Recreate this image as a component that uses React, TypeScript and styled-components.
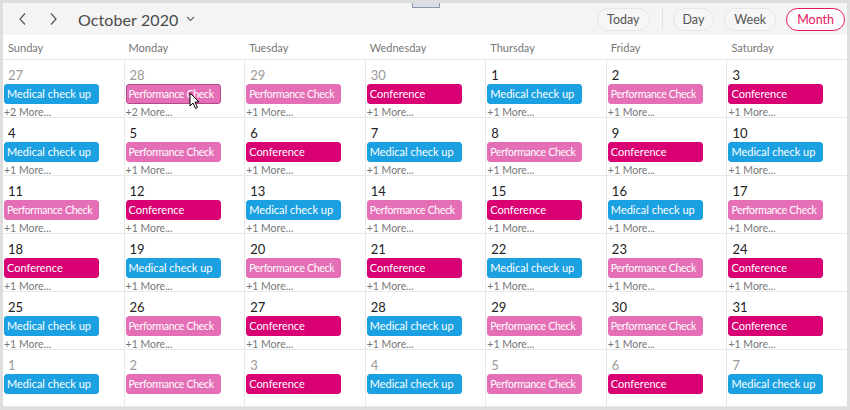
import React from "react";
import styled, { createGlobalStyle } from "styled-components";

const Global = createGlobalStyle`
  html, body { margin: 0; padding: 0; background: #fff; }
  body { font-family: "Lato", "Noto Sans", sans-serif; }
  * { box-sizing: border-box; }
`;

const Frame = styled.div`
  position: relative;
  width: 850px;
  height: 410px;
  border: 3px solid #dedede;
  background: #fff;
  display: flex;
  flex-direction: column;
  overflow: hidden;
`;

const Toolbar = styled.div`
  height: 32px;
  background: #f4f4f4;
  display: flex;
  align-items: center;
  padding: 0 0 0 5px;
  flex-shrink: 0;
`;

const NavButton = styled.button`
  width: 30px;
  height: 24px;
  border: none;
  background: transparent;
  display: flex;
  align-items: center;
  justify-content: center;
  padding: 0;
  color: #555;
`;

const Title = styled.div`
  margin-left: 10px;
  font-size: 16px;
  color: #4a4a4a;
  display: flex;
  align-items: center;
  gap: 8px;
  letter-spacing: 0.1px;
`;

const Spacer = styled.div`
  flex: 1;
`;

const Pill = styled.button<{ $active?: boolean }>`
  height: 23px;
  border-radius: 12px;
  border: 1px solid ${(p) => (p.$active ? "#e3165b" : "#e6e6e6")};
  background: ${(p) => (p.$active ? "#fff" : "#f6f6f6")};
  color: ${(p) => (p.$active ? "#e3165b" : "#555")};
  font-family: "Lato", sans-serif;
  font-size: 12.5px;
  padding: 0 ${(p) => (p.$active ? 10 : 9)}px;
  margin-left: 10px;
  display: flex;
  align-items: center;
`;

const Divider = styled.div`
  width: 1px;
  height: 22px;
  background: #e2e2e2;
  margin: 0 0 0 12px;
`;

const DayNames = styled.div`
  display: grid;
  grid-template-columns: repeat(7, 1fr);
  height: 25px;
  border-bottom: 1px solid #e6e6e6;
  flex-shrink: 0;
`;

const DayName = styled.div`
  font-size: 11px;
  color: #777;
  padding: 6px 0 0 5px;
`;

const Grid = styled.div`
  flex: 1;
  display: grid;
  grid-template-columns: repeat(7, 1fr);
  grid-template-rows: repeat(5, 58px) 1fr;
`;

const Cell = styled.div<{ $first: boolean }>`
  border-left: ${(p) => (p.$first ? "none" : "1px solid #e8e8e8")};
  border-bottom: 1px solid #e8e8e8;
  display: flex;
  flex-direction: column;
  min-width: 0;
  overflow: hidden;
`;

const DateNum = styled.div<{ $other: boolean }>`
  flex-shrink: 0;
  font-size: 13px;
  color: ${(p) => (p.$other ? "#9a9a9a" : "#222")};
  height: 24px;
  padding: 8px 0 0 5px;
  line-height: 14px;
`;

const colors = {
  med: "#1ba1e2",
  perf: "#e56fb6",
  conf: "#d80073",
} as const;

type Kind = keyof typeof colors;

const labels: Record<Kind, string> = {
  med: "Medical check up",
  perf: "Performance Check",
  conf: "Conference",
};

const Chip = styled.div<{ $kind: Kind; $selected?: boolean }>`
  flex-shrink: 0;
  width: 95px;
  height: 20px;
  margin-left: 1px;
  border-radius: 3px;
  background: ${(p) => colors[p.$kind]};
  border: 1px solid ${(p) => (p.$selected ? "#b04a88" : colors[p.$kind])};
  color: #fff;
  font-size: ${(p) => (p.$kind === "perf" ? 10.5 : 11)}px;
  letter-spacing: ${(p) => (p.$kind === "perf" ? -0.3 : 0)}px;
  line-height: 18px;
  padding-left: 2px;
  white-space: nowrap;
  overflow: hidden;
`;

const More = styled.div`
  flex-shrink: 0;
  font-size: 10.5px;
  color: #777;
  padding-left: 1px;
  margin-top: 2px;
  line-height: 12px;
`;

const Cursor = styled.svg`
  position: absolute;
  left: 186px;
  top: 89px;
`;

const TopTab = styled.div`
  position: absolute;
  left: 409px;
  top: -3px;
  width: 28px;
  height: 8px;
  background: #d8dde8;
  border: 1px solid #8d96a8;
  border-top: none;
`;

const order: Kind[] = ["med", "perf", "conf"];

type Day = { n: number; other: boolean; kind: Kind; more: number };

function buildDays(): Day[] {
  const days: Day[] = [];
  const nums: [number, boolean][] = [];
  for (let d = 27; d <= 30; d++) nums.push([d, true]);
  for (let d = 1; d <= 31; d++) nums.push([d, false]);
  for (let d = 1; d <= 7; d++) nums.push([d, true]);
  const kinds: Kind[] = ["med", "perf", "perf", "conf", "med", "perf", "conf"];
  for (let i = 7; i < 42; i++) kinds.push(order[(i - 7) % 3]);
  kinds[33] = "perf";
  kinds[34] = "conf";
  for (let i = 35; i < 42; i++) kinds[i] = order[(i - 35) % 3];
  nums.forEach(([n, other], i) => {
    days.push({ n, other, kind: kinds[i], more: i >= 35 ? 0 : i < 2 ? 2 : 1 });
  });
  return days;
}

const Chevron = ({ dir }: { dir: "l" | "r" }) => (
  <svg width="10" height="14" viewBox="0 0 10 14">
    <path
      d={dir === "l" ? "M7 1.5 L2 7 L7 12.5" : "M3 1.5 L8 7 L3 12.5"}
      fill="none"
      stroke="#555"
      strokeWidth="1.2"
    />
  </svg>
);

export default function App() {
  const days = buildDays();
  const names = ["Sunday", "Monday", "Tuesday", "Wednesday", "Thursday", "Friday", "Saturday"];
  return (
    <Frame>
      <Global />
      <Toolbar>
        <NavButton>
          <Chevron dir="l" />
        </NavButton>
        <NavButton>
          <Chevron dir="r" />
        </NavButton>
        <Title>
          October 2020
          <svg width="9" height="6" viewBox="0 0 9 6">
            <path d="M1 1 L4.5 4.5 L8 1" fill="none" stroke="#666" strokeWidth="1.1" />
          </svg>
        </Title>
        <Spacer />
        <Pill>Today</Pill>
        <Divider />
        <Pill>Day</Pill>
        <Pill>Week</Pill>
        <Pill $active>Month</Pill>
        <div style={{ width: 2 }} />
      </Toolbar>
      <DayNames>
        {names.map((n) => (
          <DayName key={n}>{n}</DayName>
        ))}
      </DayNames>
      <Grid>
        {days.map((d, i) => (
          <Cell key={i} $first={i % 7 === 0}>
            <DateNum $other={d.other}>{d.n}</DateNum>
            <Chip $kind={d.kind} $selected={i === 1}>
              {labels[d.kind]}
            </Chip>
            {d.more > 0 && <More>+{d.more} More...</More>}
          </Cell>
        ))}
      </Grid>
      <TopTab />
      <Cursor width="12" height="18" viewBox="0 0 12 18">
        <path d="M1 1 L1 14 L4 11 L6.5 16.5 L8.5 15.5 L6 10 L10 10 Z" fill="#fff" stroke="#000" strokeWidth="1" />
      </Cursor>
    </Frame>
  );
}
